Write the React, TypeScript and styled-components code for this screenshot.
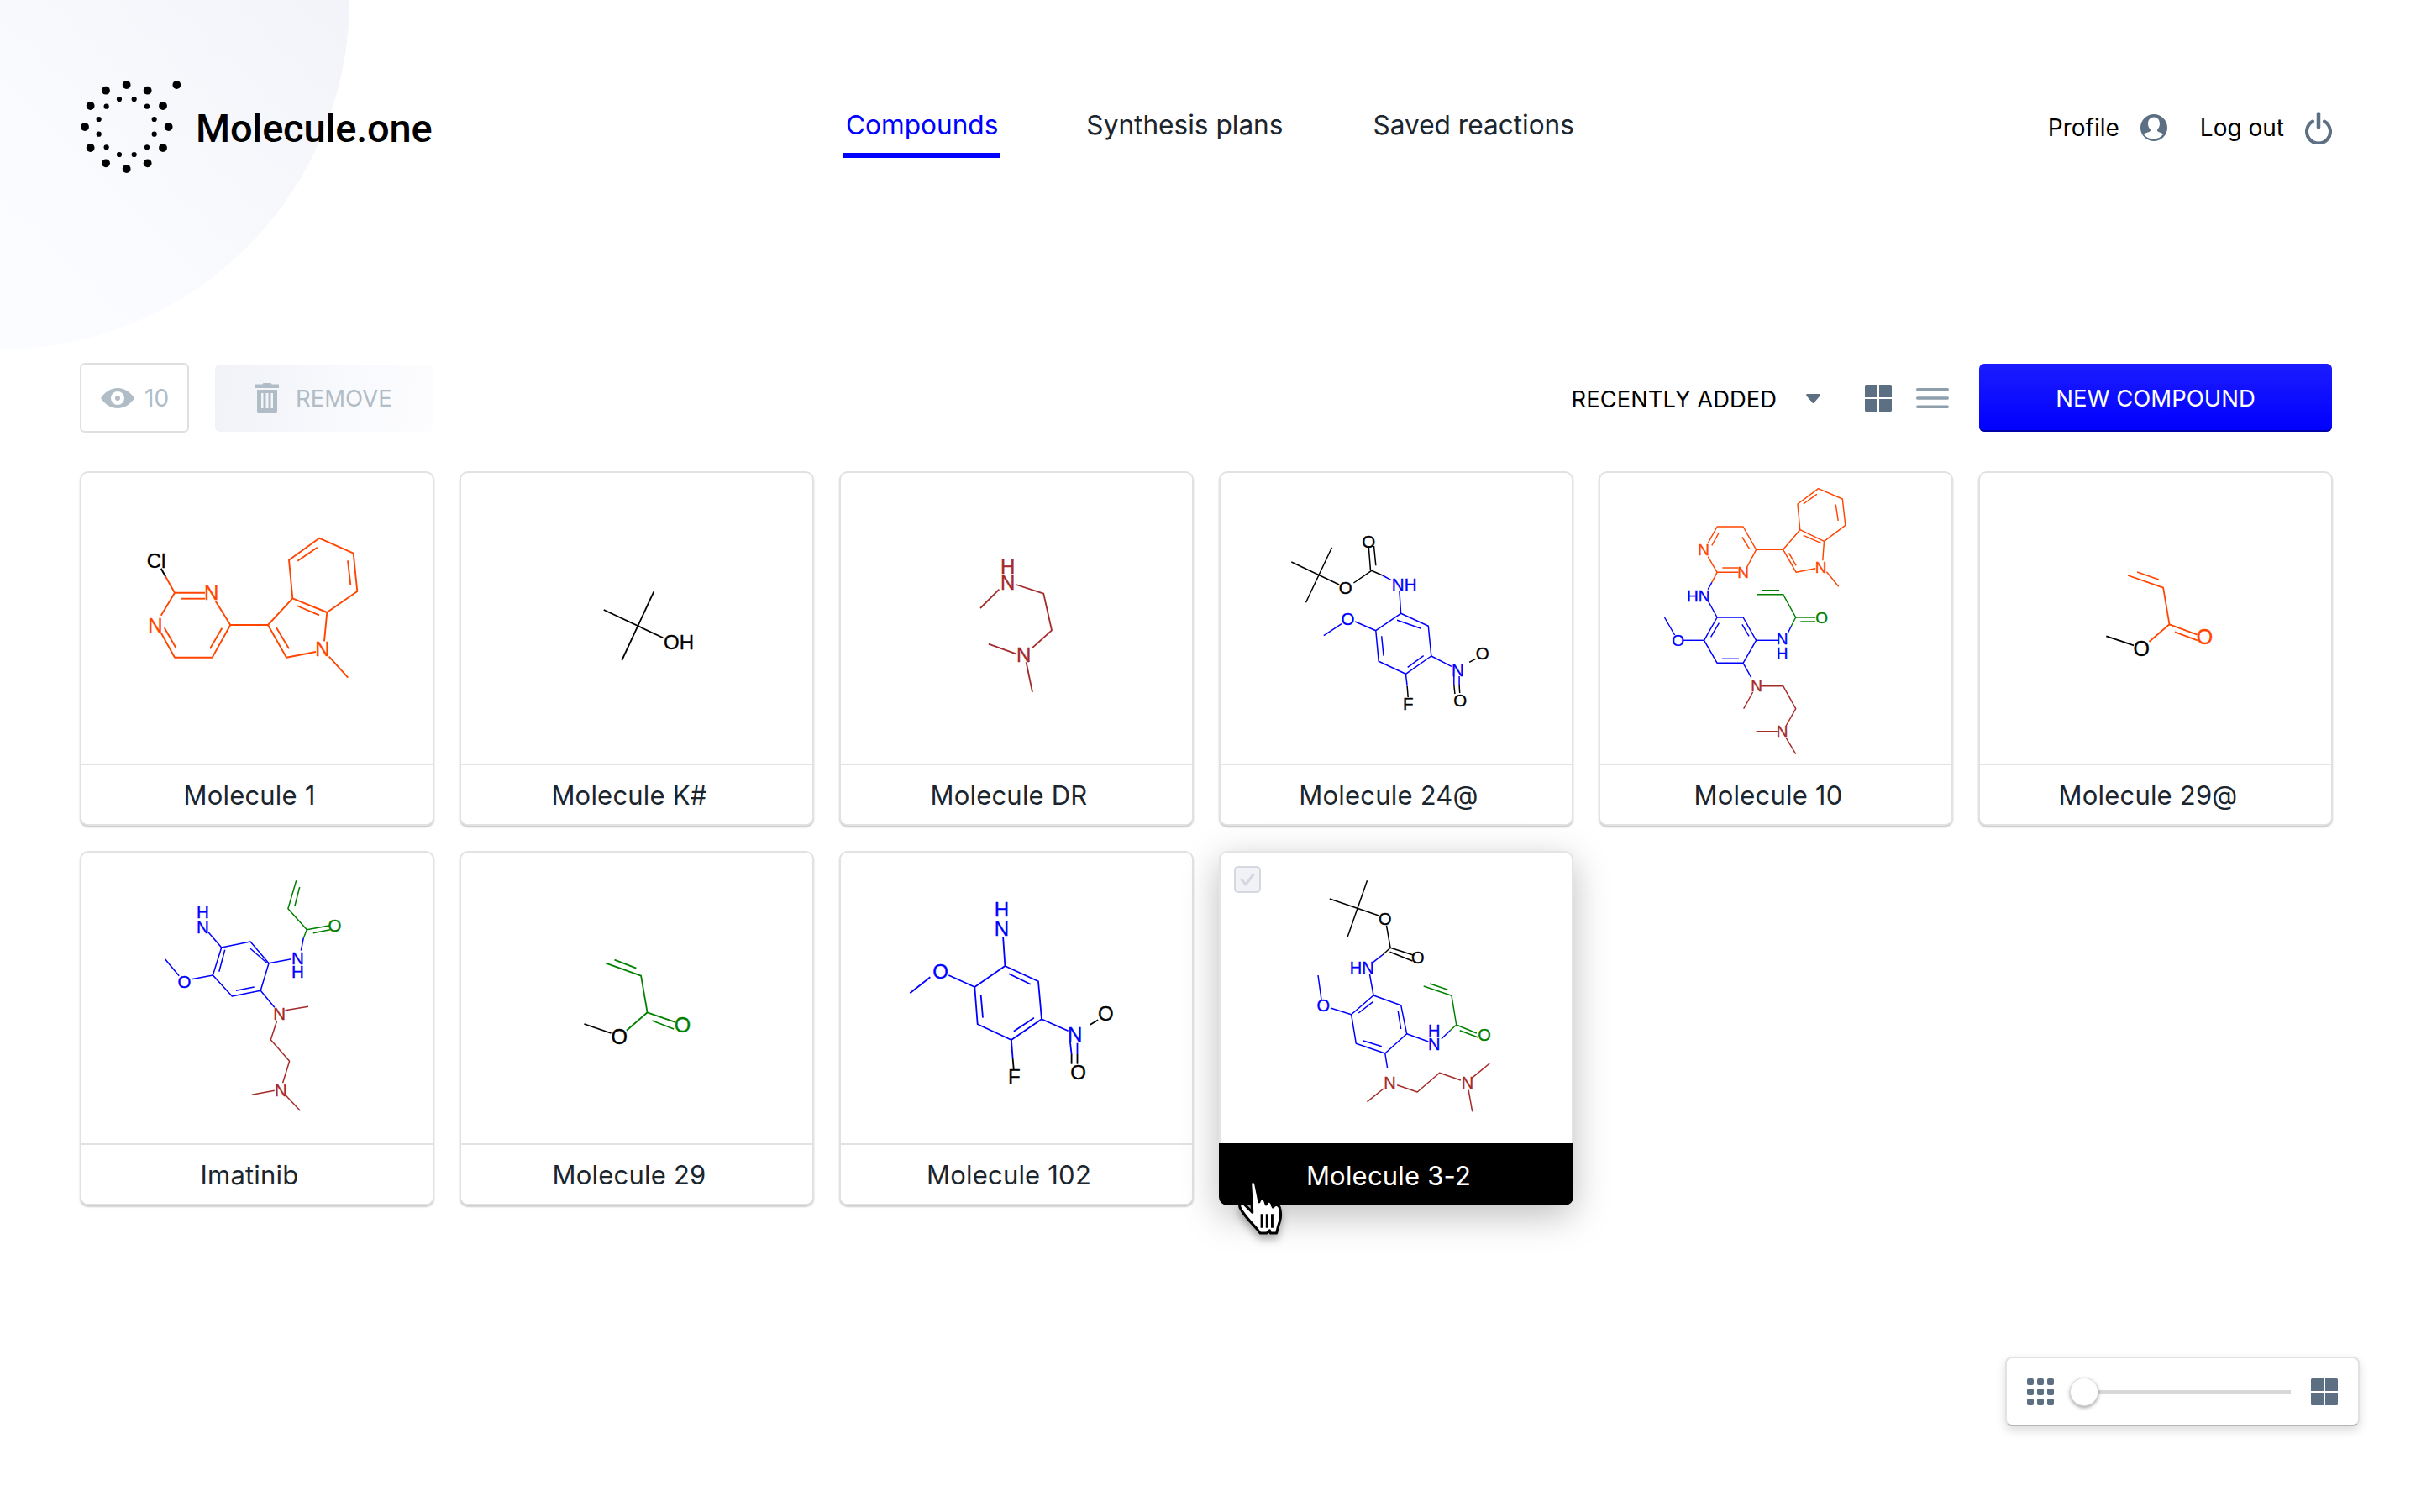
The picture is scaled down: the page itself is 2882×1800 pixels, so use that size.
import React from "react";
import styled, { createGlobalStyle } from "styled-components";

const GlobalStyle = createGlobalStyle`
  html, body { margin: 0; padding: 0; background: #fff; }
  body { font-family: Inter, "Liberation Sans", sans-serif; color: #000; }
  * { box-sizing: border-box; }
`;

const ORANGE = "#ff4500";
const BLUE = "#0000ff";
const GREEN = "#008000";
const BROWN = "#a52a2a";
const BLACK = "#000000";

type Label = [string, number, number, string];
interface Molecule {
  name: string;
  sx: number;
  sy: number;
  ox: number;
  oy: number;
  stroke: number;
  font: number;
  bonds: Record<string, number[][]>;
  labels: Label[];
}

const molecules: Molecule[] = [
  {
    name: "Molecule 1", sx: 3, sy: 3, ox: -15, oy: -11, stroke: 1.9, font: 24,
    bonds: {
      [BLACK]: [[335, 380, 352, 410]],
      [ORANGE]: [
        [352, 410, 384, 467, 492, 467], [408, 488, 492, 488], [530, 497, 583, 582, 518, 698, 384, 698, 335, 610],
        [553, 593, 510, 667], [390, 667, 347, 592], [335, 548, 384, 467], [583, 582, 717, 582, 805, 487, 928, 537, 1036, 462, 1022, 326, 900, 272, 792, 350, 805, 487],
        [717, 582, 783, 698, 888, 678], [747, 592, 792, 667], [918, 640, 928, 537], [820, 513, 900, 547], [823, 353, 893, 305], [1002, 352, 1012, 438], [935, 695, 1003, 770],
      ],
    },
    labels: [["Cl", 318, 352, BLACK], ["N", 515, 465, ORANGE], ["N", 315, 582, ORANGE], ["N", 912, 668, ORANGE]],
  },
  {
    name: "Molecule K#", sx: 3, sy: 3, ox: -1, oy: 99, stroke: 1.8, font: 24,
    bonds: { [BLACK]: [[697, 133, 583, 378], [518, 198, 730, 298]] },
    labels: [["OH", 786, 313, BLACK]],
  },
  {
    name: "Molecule DR", sx: 1.742, sy: 3, ox: 1, oy: -11, stroke: 1.8, font: 24,
    bonds: { [BROWN]: [[330, 455, 291, 522], [365, 438, 422, 470, 439, 601, 398, 665], [365, 685, 308, 650], [386, 715, 399, 822]] },
    labels: [["H", 348, 372, BROWN], ["N", 348, 430, BROWN], ["N", 381, 688, BROWN]],
  },
  {
    name: "Molecule 24@", sx: 1.742, sy: 3, ox: -451, oy: -11, stroke: 1.5, font: 20.5,
    bonds: {
      [BLACK]: [[936, 357, 1035, 438], [1020, 305, 966, 502], [1065, 432, 1102, 388, 1125, 405], [1100, 388, 1096, 300], [1111, 370, 1107, 300], [1305, 715, 1318, 703], [1273, 795, 1275, 828], [1284, 795, 1285, 825], [1176, 800, 1178, 840]],
      [BLUE]: [[1125, 405, 1143, 422], [1160, 460, 1163, 541, 1220, 586, 1226, 693, 1173, 757, 1117, 712, 1111, 602, 1163, 541], [1155, 565, 1205, 595], [1210, 692, 1177, 733], [1127, 692, 1123, 622], [1111, 602, 1068, 570], [1040, 578, 1003, 620], [1226, 693, 1268, 730], [1273, 765, 1273, 795], [1284, 765, 1284, 795], [1173, 757, 1176, 800]],
    },
    labels: [["O", 1048, 448, BLACK], ["O", 1096, 282, BLACK], ["NH", 1170, 435, BLUE], ["O", 1053, 558, BLUE], ["N", 1281, 742, BLUE], ["O", 1332, 681, BLACK], ["O", 1286, 849, BLACK], ["F", 1178, 863, BLACK]],
  },
  {
    name: "Molecule 10", sx: 1.742, sy: 3, ox: -3, oy: -11, stroke: 1.45, font: 19,
    bonds: {
      [ORANGE]: [
        [313, 375, 332, 313, 305, 231, 251, 231, 232, 290], [303, 268, 318, 310], [254, 255, 240, 298], [232, 338, 251, 394, 295, 394], [262, 378, 295, 378],
        [332, 313, 388, 313, 423, 242, 473, 283, 517, 226, 511, 132, 461, 95, 418, 150, 423, 242], [388, 313, 415, 394, 455, 380], [400, 325, 415, 370], [470, 352, 473, 283], [430, 262, 467, 290], [430, 150, 458, 115], [497, 152, 502, 210], [478, 392, 503, 445], [251, 394, 240, 430],
      ],
      [BLUE]: [[240, 430, 232, 455], [232, 495, 251, 555, 305, 555, 332, 637, 305, 718, 251, 718, 224, 637, 251, 555], [303, 580, 317, 622], [261, 703, 296, 703], [238, 625, 255, 575], [224, 637, 180, 637], [163, 618, 142, 555], [332, 637, 378, 637], [398, 610, 405, 585], [305, 718, 322, 770]],
      [GREEN]: [[405, 585, 414, 555, 388, 473, 333, 473], [345, 458, 380, 458], [414, 555, 455, 555], [424, 570, 455, 570]],
      [BROWN]: [[342, 800, 388, 800, 414, 881, 394, 942], [376, 962, 332, 962], [394, 985, 414, 1043], [325, 822, 306, 881]],
    },
    labels: [["N", 223, 314, ORANGE], ["N", 305, 395, ORANGE], ["N", 466, 375, ORANGE], ["HN", 212, 477, BLUE], ["O", 170, 637, BLUE], ["N", 386, 632, BLUE], ["H", 386, 681, BLUE], ["O", 468, 557, GREEN], ["N", 333, 800, BROWN], ["N", 386, 962, BROWN]],
  },
  {
    name: "Molecule 29@", sx: 1.742, sy: 3, ox: -455, oy: -11, stroke: 1.8, font: 25,
    bonds: {
      [ORANGE]: [[1103, 405, 1176, 449, 1189, 580, 1247, 617], [1122, 393, 1167, 420], [1200, 607, 1247, 637], [1189, 580, 1147, 642]],
      [BLACK]: [[1115, 655, 1058, 622]],
    },
    labels: [["O", 1262, 624, ORANGE], ["O", 1131, 667, BLACK]],
  },
  {
    name: "Imatinib", sx: 1.742, sy: 3, ox: -15, oy: -13, stroke: 1.5, font: 20.5,
    bonds: {
      [GREEN]: [[475, 145, 458, 245, 497, 320, 545, 305], [482, 168, 472, 235], [510, 332, 545, 320], [497, 320, 490, 350]],
      [BLUE]: [[490, 350, 485, 395], [465, 425, 418, 440, 380, 363, 320, 384, 302, 483, 342, 558, 401, 538, 418, 440], [380, 388, 415, 440], [327, 392, 315, 470], [350, 538, 388, 525], [320, 384, 293, 330], [302, 483, 258, 497], [232, 485, 203, 425], [401, 538, 430, 598]],
      [BROWN]: [[452, 608, 500, 595], [435, 645, 422, 713, 461, 790, 447, 868], [430, 895, 383, 910], [452, 910, 483, 967]],
    },
    labels: [["O", 555, 303, GREEN], ["N", 478, 420, BLUE], ["H", 478, 468, BLUE], ["N", 281, 310, BLUE], ["H", 281, 256, BLUE], ["O", 243, 505, BLUE], ["N", 440, 620, BROWN], ["N", 443, 892, BROWN]],
  },
  {
    name: "Molecule 29", sx: 1.742, sy: 3, ox: -467, oy: -13, stroke: 1.8, font: 25,
    bonds: {
      [GREEN]: [[1117, 440, 1190, 485, 1203, 616, 1260, 650], [1135, 428, 1180, 458], [1213, 645, 1258, 675], [1203, 616, 1160, 680]],
      [BLACK]: [[1128, 690, 1072, 657]],
    },
    labels: [["O", 1276, 660, GREEN], ["O", 1145, 703, BLACK]],
  },
  {
    name: "Molecule 102", sx: 1.742, sy: 3, ox: -19, oy: -13, stroke: 1.8, font: 24,
    bonds: {
      [BLUE]: [[373, 345, 377, 450, 446, 505, 453, 640, 390, 714, 320, 658, 314, 525, 377, 450], [385, 478, 430, 515], [437, 635, 395, 683], [331, 635, 327, 555], [314, 525, 260, 483], [222, 490, 180, 547], [453, 640, 508, 682], [512, 720, 515, 765], [527, 725, 527, 765], [390, 714, 393, 780]],
      [BLACK]: [[553, 660, 570, 643], [515, 765, 515, 800], [527, 765, 527, 800], [393, 780, 395, 820]],
    },
    labels: [["H", 370, 247, BLUE], ["N", 370, 317, BLUE], ["O", 243, 468, BLUE], ["N", 522, 695, BLUE], ["O", 586, 620, BLACK], ["O", 529, 829, BLACK], ["F", 396, 845, BLACK]],
  },
  {
    name: "Molecule 3-2", sx: 1.742, sy: 3, ox: -471, oy: -13, stroke: 1.5, font: 20,
    bonds: {
      [BLACK]: [[1050, 210, 1152, 270], [1128, 145, 1087, 347], [1168, 305, 1176, 385, 1225, 412], [1175, 400, 1222, 432], [1176, 385, 1160, 410]],
      [BLUE]: [[1160, 410, 1140, 437], [1133, 478, 1141, 555, 1198, 590, 1210, 692, 1165, 762, 1105, 727, 1095, 623, 1141, 555], [1192, 612, 1198, 675], [1158, 737, 1120, 717], [1110, 618, 1140, 578], [1095, 623, 1052, 600], [1033, 570, 1026, 483], [1210, 692, 1255, 720], [1282, 710, 1300, 680], [1165, 762, 1170, 815]],
      [GREEN]: [[1300, 680, 1313, 660, 1303, 556, 1245, 522], [1295, 535, 1258, 513], [1313, 660, 1355, 690], [1320, 680, 1358, 705]],
      [BROWN]: [[1190, 875, 1232, 900, 1278, 832, 1322, 858], [1345, 850, 1382, 798], [1338, 893, 1346, 970], [1162, 888, 1128, 935]],
    },
    labels: [["O", 1165, 283, BLACK], ["O", 1233, 420, BLACK], ["HN", 1117, 455, BLUE], ["O", 1037, 590, BLUE], ["H", 1267, 682, BLUE], ["N", 1267, 730, BLUE], ["O", 1371, 695, GREEN], ["N", 1175, 868, BROWN], ["N", 1336, 868, BROWN]],
  },
];

const outerDots = [[212, 93], [138, 113], [287, 113], [83, 168], [342, 168], [63, 243], [362, 243], [83, 318], [342, 318], [138, 373], [287, 373], [212, 393], [391, 93]];
const innerDots = [[186, 144], [239, 144], [140, 170], [285, 170], [113, 216], [311, 216], [113, 269], [311, 269], [140, 316], [285, 316], [186, 342], [239, 342]];

const Page = styled.div`
  position: relative;
  min-height: 1800px;
  padding: 0 106px 0 95px;
  overflow: hidden;
`;
const Arc = styled.div`
  position: absolute;
  top: 0;
  left: 0;
  width: 416px;
  height: 416px;
  border-bottom-right-radius: 416px;
  background: linear-gradient(45deg, #fbfcff 20%, #f3f4f9 100%);
`;
const Header = styled.header`
  position: relative;
  display: flex;
  align-items: flex-start;
  height: 432px;
`;
const Logo = styled.div`
  display: flex;
  align-items: center;
  gap: 18px;
  width: 909px;
  height: 120px;
  margin-top: 91px;
`;
const LogoMark = styled.svg`
  width: 120px;
  height: 120px;
  flex: none;
`;
const LogoText = styled.span`
  padding-top: 3px;
  font-family: Roboto, sans-serif;
  font-weight: 500;
  font-size: 47px;
  letter-spacing: -0.2px;
  color: #000;
`;
const Nav = styled.nav`
  display: flex;
  margin-top: 125px;
`;
const NavLink = styled.a<{ $active?: boolean; $gap: number }>`
  display: block;
  height: 63px;
  padding: 0 3px;
  margin-right: ${(p) => p.$gap}px;
  font-size: 31.6px;
  line-height: 48px;
  color: ${(p) => (p.$active ? "#0000ff" : "#1b252e")};
  border-bottom: 6px solid ${(p) => (p.$active ? "#0000ff" : "transparent")};
`;
const UserMenu = styled.div`
  display: flex;
  align-items: center;
  margin: 132px 0 0 auto;
  font-size: 28px;
  height: 40px;
`;
const UserLink = styled.a<{ $gap: number }>`
  display: flex;
  align-items: center;
  gap: 25px;
  margin-right: ${(p) => p.$gap}px;
  color: #000;
`;
const Toolbar = styled.div`
  position: relative;
  display: flex;
  align-items: center;
  height: 83px;
  margin-bottom: 46px;
`;
const ViewCount = styled.div`
  display: flex;
  align-items: center;
  gap: 12px;
  width: 130px;
  height: 83px;
  padding-left: 23px;
  margin-right: 31px;
  border: 2px solid #dedfe1;
  border-radius: 6px;
  font-size: 28px;
  color: #b0bcc6;
`;
const RemoveButton = styled.button`
  display: flex;
  align-items: center;
  gap: 20px;
  width: 260px;
  height: 80px;
  padding: 0 0 0 48px;
  border: 0;
  border-radius: 6px;
  font: inherit;
  font-size: 27.5px;
  color: #b0bcc6;
  background: linear-gradient(100deg, #f0f2f7 0%, #f8f9fd 55%, #fdfdff 100%);
`;
const ToolbarRight = styled.div`
  display: flex;
  align-items: center;
  margin-left: auto;
`;
const SortSelect = styled.div`
  display: flex;
  align-items: center;
  gap: 35px;
  margin-right: 53px;
  padding-top: 2px;
  font-size: 27.4px;
  color: #000;
`;
const ViewToggle = styled.div`
  display: flex;
  align-items: center;
  gap: 29px;
  margin-right: 36px;
`;
const PrimaryButton = styled.button`
  width: 420px;
  height: 81px;
  padding: 2px 0 0;
  border: 0;
  border-radius: 6px;
  border-bottom: 2px solid #0000a8;
  font: inherit;
  font-size: 27.5px;
  color: #fff;
  background: linear-gradient(180deg, #1c1cff 0%, #0000ff 100%);
`;
const Grid = styled.div`
  position: relative;
  display: grid;
  grid-template-columns: repeat(6, 422px);
  grid-auto-rows: 422px;
  gap: 30px;
`;
const Card = styled.article<{ $hover?: boolean }>`
  position: relative;
  display: flex;
  flex-direction: column;
  border: 2px solid ${(p) => (p.$hover ? "#e4e4e4" : "#e2e2e2")};
  border-radius: 10px;
  background: #fff;
  box-shadow: ${(p) =>
    p.$hover ? "0 12px 44px rgba(0, 0, 0, 0.26)" : "0 2px 2px rgba(0, 0, 0, 0.2)"};
`;
const Figure = styled.svg`
  display: block;
  width: 418px;
  height: 346px;
  flex: none;
`;
const CardLabel = styled.div<{ $hover?: boolean }>`
  flex: 1;
  display: flex;
  align-items: center;
  justify-content: center;
  padding-right: 18px;
  margin: ${(p) => (p.$hover ? "0 -2px -2px" : "0")};
  border-top: 2px solid ${(p) => (p.$hover ? "#000" : "#e2e2e2")};
  border-radius: 0 0 ${(p) => (p.$hover ? 10 : 8)}px ${(p) => (p.$hover ? 10 : 8)}px;
  font-size: 31px;
  letter-spacing: 0.2px;
  color: ${(p) => (p.$hover ? "#fff" : "#1b252e")};
  background: ${(p) => (p.$hover ? "#000" : "#fff")};
`;
const Checkbox = styled.div`
  position: absolute;
  top: 16px;
  left: 16px;
  width: 32px;
  height: 32px;
  border: 2px solid #d5d8df;
  border-radius: 5px;
  background: #f1f2f6;
`;
const HandCursor = styled.svg`
  position: absolute;
  left: 19px;
  top: 389px;
  width: 56px;
  height: 66px;
  filter: drop-shadow(0 6px 5px rgba(0, 0, 0, 0.3));
`;
const SizePanel = styled.div`
  position: absolute;
  right: 73px;
  bottom: 102px;
  display: flex;
  align-items: center;
  width: 422px;
  height: 83px;
  padding: 0 24px;
  border: 2px solid #e2e2e2;
  border-bottom-color: #b5b5b5;
  border-radius: 8px;
  background: #fff;
  box-shadow: 0 5px 12px rgba(0, 0, 0, 0.14);
`;
const Track = styled.div`
  position: relative;
  flex: 1;
  height: 4px;
  margin: 0 24px 0 22px;
  background: #d8d8d8;
`;
const Knob = styled.div`
  position: absolute;
  left: -3px;
  top: -15px;
  width: 34px;
  height: 34px;
  border: 1px solid #dcdcdc;
  border-radius: 50%;
  background: #fff;
  box-shadow: 0 2px 4px rgba(0, 0, 0, 0.35);
`;

const FourGrid = ({ size, color = "#5d7083" }: { size: number; color?: string }) => (
  <svg width={size} height={size} viewBox="0 0 32 32">
    <path fill={color} d="M1.500 0H15v15H0V1.500A1.500 1.500 0 0 1 1.500 0ZM17 0h13.500A1.500 1.500 0 0 1 32 1.500V15H17ZM0 17h15v15H1.500A1.500 1.500 0 0 1 0 30.500ZM17 17h15v13.500a1.500 1.500 0 0 1-1.500 1.500H17Z" />
  </svg>
);
const NineGrid = () => (
  <svg width={32} height={32} viewBox="0 0 32 32">
    {[0, 12, 24].flatMap((y) =>
      [0, 12, 24].map((x) => <rect key={`${x}-${y}`} x={x} y={y} width="8" height="8" rx="2" fill="#5d7083" />)
    )}
  </svg>
);

const MoleculeFigure = ({ m }: { m: Molecule }) => {
  const px = (x: number) => x / m.sx + m.ox;
  const py = (y: number) => y / m.sy + m.oy;
  return (
    <Figure viewBox="2 2 418 346">
      {Object.entries(m.bonds).flatMap(([color, lines]) =>
        lines.map((line, i) => (
          <polyline
            key={color + i}
            fill="none"
            stroke={color}
            strokeWidth={m.stroke}
            strokeLinejoin="round"
            points={line.map((v, j) => (j % 2 === 0 ? px(v) : py(v)).toFixed(1)).join(" ")}
          />
        ))
      )}
      {m.labels.map(([t, x, y, color], i) => (
        <text
          key={i}
          x={px(x)}
          y={py(y)}
          fill={color}
          stroke={color}
          strokeWidth={0.35}
          fontFamily="'Liberation Sans', sans-serif"
          fontSize={m.font}
          textAnchor="middle"
          dominantBaseline="central"
        >
          {t}
        </text>
      ))}
    </Figure>
  );
};

export default function App() {
  return (
    <>
      <GlobalStyle />
      <Page>
        <Arc />
        <Header>
          <Logo>
            <LogoMark viewBox="0 0 120 120">
              {outerDots.map(([x, y], i) => (
                <circle key={i} cx={x / 3 - 15} cy={y / 3 - 21} r="4.900" fill="#000" />
              ))}
              {innerDots.map(([x, y], i) => (
                <circle key={i} cx={x / 3 - 15} cy={y / 3 - 21} r="3.100" fill="#000" />
              ))}
            </LogoMark>
            <LogoText>Molecule.one</LogoText>
          </Logo>
          <Nav>
            <NavLink $active $gap={99}>Compounds</NavLink>
            <NavLink $gap={101}>Synthesis plans</NavLink>
            <NavLink $gap={0}>Saved reactions</NavLink>
          </Nav>
          <UserMenu>
            <UserLink $gap={39}>
              Profile
              <svg width="32" height="32" viewBox="0 0 32 32">
                <circle cx="16" cy="16" r="16" fill="#5d7083" />
                <path fill="#fff" d="M16 3.500c4.200 0 7 3.300 7 7.800 0 2.900-1.200 5.300-2.900 6.800v2c1.600 1.500 4.700 1.800 7 3.700A13 13 0 0 1 16 29a13 13 0 0 1-12.100-5.200c2.300-1.900 6.400-2.200 8-3.700v-2c-1.700-1.500-2.900-3.900-2.900-6.800 0-4.500 2.800-7.800 7-7.800Z" />
              </svg>
            </UserLink>
            <UserLink $gap={0}>
              Log out
              <svg width="32" height="38" viewBox="0 0 32 38" fill="none" stroke="#5d7083" strokeLinecap="round">
                <path strokeWidth="4" d="M9 11.500a14 14 0 1 0 14 0" />
                <path strokeWidth="4.500" d="M16 2.500v16" />
              </svg>
            </UserLink>
          </UserMenu>
        </Header>
        <Toolbar>
          <ViewCount>
            <svg width="40" height="24" viewBox="0 0 40 24">
              <path fill="#b0bcc6" fillRule="evenodd" d="M20 0c8.500 0 15.500 5 20 12-4.500 7-11.500 12-20 12S4.500 19 0 12C4.500 5 11.500 0 20 0Zm0 4a8 8 0 1 0 0 16 8 8 0 0 0 0-16Zm0 5a3 3 0 1 1 0 6 3 3 0 0 1 0-6Z" />
            </svg>
            10
          </ViewCount>
          <RemoveButton>
            <svg width="28" height="36" viewBox="0 0 28 36">
              <path fill="#b0bcc6" fillRule="evenodd" d="M10 0h8a1.500 1.500 0 0 1 1.500 1.500H28V6H0V1.500h8.500A1.500 1.500 0 0 1 10 0ZM2 8h24v26.500a1.500 1.500 0 0 1-1.500 1.500h-21A1.500 1.500 0 0 1 2 34.500ZM7 12v18h2.500V12Zm5.500 0v18h3V12Zm6 0v18H21V12Z" />
            </svg>
            REMOVE
          </RemoveButton>
          <ToolbarRight>
            <SortSelect>
              RECENTLY ADDED
              <svg width="17" height="11" viewBox="0 0 17 11">
                <path fill="#5d7083" d="M1.500 0h14a1.300 1.300 0 0 1 1 2.200L9.500 10.500a1.300 1.300 0 0 1-2 0L.5 2.200a1.300 1.300 0 0 1 1-2.200Z" />
              </svg>
            </SortSelect>
            <ViewToggle>
              <FourGrid size={32} />
              <svg width="39" height="24" viewBox="0 0 39 24">
                <g fill="#8e9eab">
                  <rect width="39" height="3.500" rx="1.700" />
                  <rect y="10.200" width="39" height="3.500" rx="1.700" />
                  <rect y="20.500" width="39" height="3.500" rx="1.700" />
                </g>
              </svg>
            </ViewToggle>
            <PrimaryButton>NEW COMPOUND</PrimaryButton>
          </ToolbarRight>
        </Toolbar>
        <Grid>
          {molecules.map((m, i) => {
            const hover = i === molecules.length - 1;
            return (
              <Card key={m.name} $hover={hover}>
                <MoleculeFigure m={m} />
                <CardLabel $hover={hover}>{m.name}</CardLabel>
                {hover && (
                  <>
                    <Checkbox>
                      <svg width="28" height="28" viewBox="0 0 28 28" fill="none">
                        <path d="M7 14l5 6 9-12" stroke="#d5d8df" strokeWidth="3" strokeLinecap="round" strokeLinejoin="round" />
                      </svg>
                    </Checkbox>
                    <HandCursor viewBox="0 0 52 64">
                      <path fill="#fff" stroke="#000" strokeWidth="3" strokeLinejoin="round" d="M15 5C16 1 20 1 21 6L25 26C26 21 31 21 32 26L33 29C34 24 39 24 40 30L41 32C43 28 48 29 49 34 51 42 49 48 47 54L45 62H38L37 59 34 62H26L23 58C18 52 8 43 3 33 1 28 5 26 8 29L17 38Z" />
                      <path stroke="#000" strokeWidth="2.800" d="M28 40V56M34 40V56M40 40V56" />
                    </HandCursor>
                  </>
                )}
              </Card>
            );
          })}
        </Grid>
        <SizePanel>
          <NineGrid />
          <Track>
            <Knob />
          </Track>
          <FourGrid size={32} />
        </SizePanel>
      </Page>
    </>
  );
}
